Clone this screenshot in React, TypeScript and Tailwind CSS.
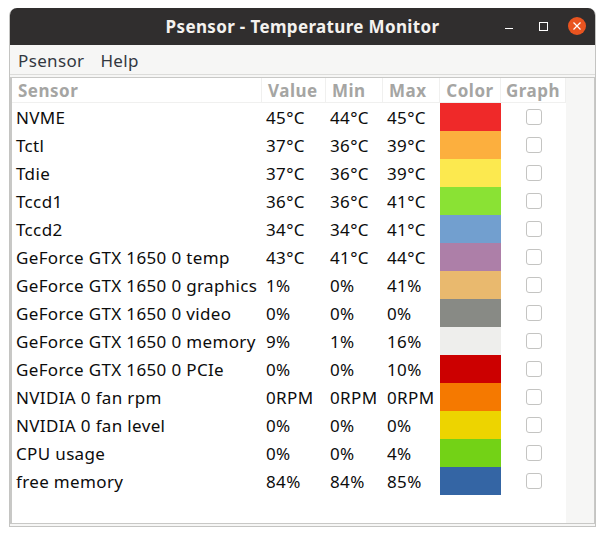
const ROWS = [
  { name: 'NVME', value: '45°C', min: '44°C', max: '45°C', color: '#ef2929' },
  { name: 'Tctl', value: '37°C', min: '36°C', max: '39°C', color: '#fcaf3e' },
  { name: 'Tdie', value: '37°C', min: '36°C', max: '39°C', color: '#fce94f' },
  { name: 'Tccd1', value: '36°C', min: '36°C', max: '41°C', color: '#8ae234' },
  { name: 'Tccd2', value: '34°C', min: '34°C', max: '41°C', color: '#729fcf' },
  { name: 'GeForce GTX 1650 0 temp', value: '43°C', min: '41°C', max: '44°C', color: '#ad7fa8' },
  { name: 'GeForce GTX 1650 0 graphics', value: '1%', min: '0%', max: '41%', color: '#e9b96e' },
  { name: 'GeForce GTX 1650 0 video', value: '0%', min: '0%', max: '0%', color: '#888a85' },
  { name: 'GeForce GTX 1650 0 memory', value: '9%', min: '1%', max: '16%', color: '#eeeeec' },
  { name: 'GeForce GTX 1650 0 PCIe', value: '0%', min: '0%', max: '10%', color: '#cc0000' },
  { name: 'NVIDIA 0 fan rpm', value: '0RPM', min: '0RPM', max: '0RPM', color: '#f57900' },
  { name: 'NVIDIA 0 fan level', value: '0%', min: '0%', max: '0%', color: '#edd400' },
  { name: 'CPU usage', value: '0%', min: '0%', max: '4%', color: '#73d216' },
  { name: 'free memory', value: '84%', min: '84%', max: '85%', color: '#3465a4' },
];

const COLS = 'grid grid-cols-[250px_64px_57px_57px_61px_65px]';

function Head({ label, center }: { label: string; center?: boolean }) {
  return (
    <div className={`flex h-[25px] items-center border-r border-b border-[#f0f0ef] pt-[1px] text-[17px] font-bold tracking-[0.5px] text-[#a5a5a3] ${center ? 'justify-center' : 'pl-[6px]'}`}>
      {label}
    </div>
  );
}

export default function App() {
  return (
    <div className="h-[536px] w-[605px] overflow-hidden bg-white pt-[8px] pl-[9px] font-['Noto_Sans',sans-serif] text-[17px] tracking-[0.35px] text-[#0c0c0c]">
      <div className="flex h-[519px] w-[587px] flex-col rounded-t-[8px] border-x border-b border-[#c4c4c2] bg-[#f6f6f5]">
        <div className="relative flex h-[37px] shrink-0 items-center justify-center rounded-t-[7px] bg-[#302e2e] font-bold text-[#f4f2ef]">
          Psensor - Temperature Monitor
          <span className="absolute top-[20px] left-[495px] h-[1px] w-[8px] bg-white" />
          <span className="absolute top-[14px] left-[529px] h-[9px] w-[9px] border border-white" />
          <span className="absolute top-[9px] left-[558px] flex h-[18px] w-[18px] items-center justify-center rounded-full bg-[#e95420]">
            <svg width="10" height="10" viewBox="0 0 10 10" fill="none" stroke="white" strokeWidth="1.2">
              <path d="M1.5 1.5l7 7M8.5 1.5l-7 7" />
            </svg>
          </span>
        </div>
        <div className="flex h-[30px] shrink-0 items-center gap-[16px] border-b border-[#dcdcda] pt-[2px] pl-[8px] text-[#33383f]">
          <span>Psensor</span>
          <span>Help</span>
        </div>
        <div className="mt-[2px] mb-[2px] flex min-h-0 flex-1 border-y border-r border-l-2 border-[#c8c8c6]">
          <div className="w-[554px] bg-white">
            <div className={COLS}>
              <Head label="Sensor" />
              <Head label="Value" />
              <Head label="Min" />
              <Head label="Max" />
              <Head label="Color" center />
              <Head label="Graph" center />
            </div>
            {ROWS.map((row) => (
              <div key={row.name} className={`${COLS} h-[28px] items-center`}>
                <span className="pt-[2px] pl-[4px] whitespace-nowrap">{row.name}</span>
                <span className="pt-[2px] pl-[4px]">{row.value}</span>
                <span className="pt-[2px] pl-[4px]">{row.min}</span>
                <span className="pt-[2px] pl-[4px]">{row.max}</span>
                <div className="h-[28px]" style={{ backgroundColor: row.color }} />
                <div className="flex items-center justify-center">
                  <span className="h-[16px] w-[16px] rounded-[3px] border border-[#c4c4c2] bg-white" />
                </div>
              </div>
            ))}
          </div>
        </div>
      </div>
    </div>
  );
}
